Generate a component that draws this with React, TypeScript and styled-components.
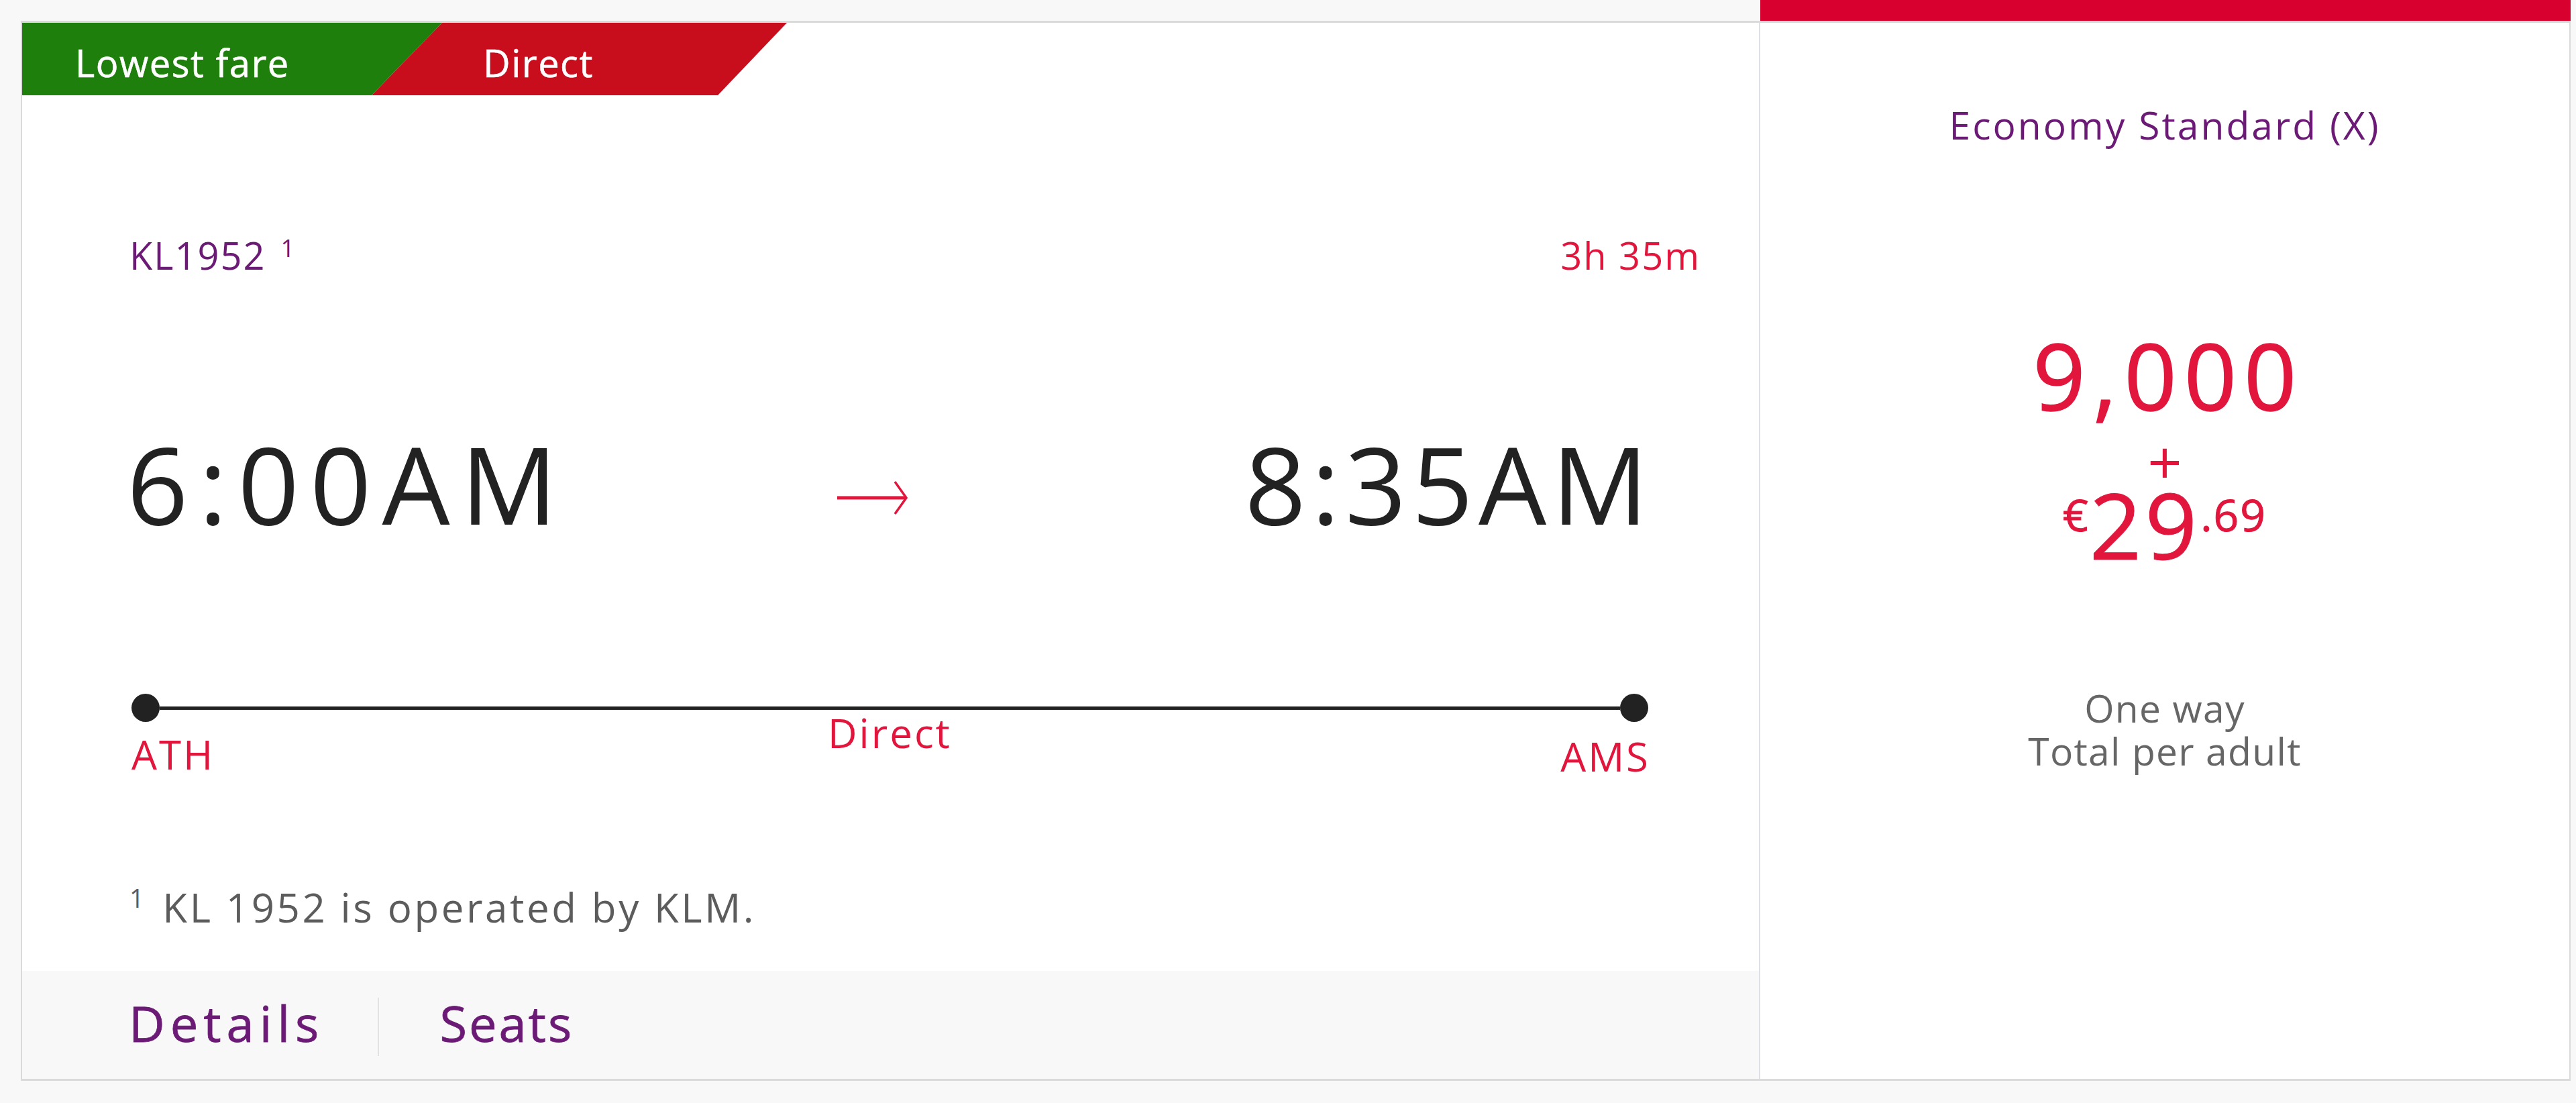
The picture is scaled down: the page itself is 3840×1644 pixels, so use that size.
import React from "react";
import styled, { createGlobalStyle } from "styled-components";

const GlobalStyle = createGlobalStyle`
  html, body {
    margin: 0;
    padding: 0;
    background: #f8f8f8;
  }
  body {
    font-family: "Open Sans", "Noto Sans", "Liberation Sans", sans-serif;
  }
`;

const purple = "#6b1a75";
const red = "#e2163d";

const Page = styled.div`
  width: 3840px;
  height: 1644px;
  box-sizing: border-box;
  padding: 0 8px 0 31px;
  background: #f8f8f8;
`;

// red mark above the selected fare column
const SelectionStrip = styled.div`
  display: grid;
  grid-template-columns: 2593px 1fr;
  height: 31px;
`;

const SelectedMark = styled.div`
  grid-column: 2;
  background: #d7002e;
`;

const Card = styled.div`
  display: grid;
  grid-template-columns: 2589px 1fr;
  border: 2px solid #dadada;
  border-top-width: 3px;
  border-bottom-width: 3px;
  background: #fff;
`;

const FlightPanel = styled.section`
  display: flex;
  flex-direction: column;
`;

const TagRow = styled.div`
  display: flex;
  height: 108px;
`;

const Tag = styled.div<{ $bg: string; $width: number; $pad: number; $overlap?: boolean }>`
  display: flex;
  align-items: center;
  box-sizing: border-box;
  width: ${(p) => p.$width}px;
  height: 100%;
  padding: 10px 0 0 ${(p) => p.$pad}px;
  margin-left: ${(p) => (p.$overlap ? "-105px" : "0")};
  background: ${(p) => p.$bg};
  color: #fff;
  font-size: 56px;
  letter-spacing: 1.5px;
  line-height: 76px;
  -webkit-text-stroke: 0.6px #fff;
  clip-path: ${(p) =>
    p.$overlap
      ? "polygon(105px 0, 100% 0, calc(100% - 103px) 100%, 0 100%)"
      : "polygon(0 0, 100% 0, calc(100% - 105px) 100%, 0 100%)"};
`;

const HeaderRow = styled.div`
  display: flex;
  justify-content: space-between;
  margin-top: 200px;
  padding: 0 87px 0 160px;
  font-size: 56px;
  line-height: 76px;
  letter-spacing: 2px;
`;

const FlightNumber = styled.span`
  color: ${purple};
`;

const Sup = styled.span`
  font-size: 36px;
  line-height: 0;
  vertical-align: 19px;
  margin-left: 22px;
`;

const Duration = styled.span`
  color: ${red};
`;

const TimesRow = styled.div`
  display: grid;
  grid-template-columns: 1fr auto 1fr;
  margin-top: 202px;
  padding: 0 165px 0 156px;
`;

const Time = styled.div<{ $end?: boolean; $spacing: number }>`
  justify-self: ${(p) => (p.$end ? "end" : "start")};
  color: #222;
  font-size: 160px;
  line-height: 200px;
  letter-spacing: ${(p) => p.$spacing}px;
  margin-right: ${(p) => (p.$end ? -p.$spacing : 0)}px;
`;

const ArrowBox = styled.div`
  align-self: end;
  margin: 0 44px 52px 0;
  display: flex;
`;

const Timeline = styled.div`
  display: flex;
  flex-direction: column;
  margin-top: 214px;
  padding: 0 165px 0 163px;
`;

const Track = styled.div`
  display: flex;
  align-items: center;
  height: 42px;
`;

const Dot = styled.span`
  width: 42px;
  height: 42px;
  border-radius: 50%;
  background: #222;
  flex-shrink: 0;
`;

const Line = styled.span`
  flex: 1;
  height: 5px;
  background: #222;
`;

const Labels = styled.div`
  display: grid;
  grid-template-columns: 1fr auto 1fr;
  align-items: start;
  font-size: 60px;
  line-height: 72px;
  letter-spacing: 3px;
  color: ${red};
`;

const RouteLabel = styled.span<{ $align: "start" | "center" | "end"; $top: number }>`
  justify-self: ${(p) => p.$align};
  margin-top: ${(p) => p.$top}px;
  margin-right: ${(p) => (p.$align === "end" ? -3 : 0)}px;
`;

const Footnote = styled.p`
  margin: 153px 0 0;
  padding-left: 160px;
  font-size: 60px;
  line-height: 72px;
  letter-spacing: 3.6px;
  color: #5c5c5c;
`;

const NoteMark = styled.span`
  font-size: 38px;
  line-height: 0;
  vertical-align: 22px;
  margin-right: 24px;
`;

const Footer = styled.nav`
  display: flex;
  align-items: center;
  box-sizing: border-box;
  height: 161px;
  margin-top: 59px;
  padding: 0 0 6px 159px;
  background: #f8f8f8;
`;

const FooterLink = styled.a<{ $spacing: number }>`
  color: ${purple};
  font-size: 74px;
  letter-spacing: ${(p) => p.$spacing}px;
  line-height: 90px;
  text-decoration: none;
  -webkit-text-stroke: 0.8px ${purple};
`;

const FooterDivider = styled.span`
  width: 2px;
  height: 87px;
  margin: 12px 90px 0 80px;
  background: #e2e2e2;
`;

const FarePanel = styled.section`
  display: flex;
  flex-direction: column;
  align-items: center;
  padding-top: 118px;
  border-left: 2px solid #dde1e6;
`;

const FareName = styled.div`
  color: ${purple};
  font-size: 57px;
  line-height: 68px;
  letter-spacing: 3px;
`;

const Miles = styled.div`
  margin-top: 271px;
  color: ${red};
  font-size: 137px;
  line-height: 137px;
  letter-spacing: 11px;
  margin-right: -11px;
  -webkit-text-stroke: 1.5px ${red};
`;

const Plus = styled.div`
  margin-top: 24px;
  color: ${red};
  font-size: 90px;
  line-height: 70px;
`;

const Cash = styled.div`
  display: flex;
  align-items: flex-start;
  color: ${red};
  -webkit-text-stroke: 1px ${red};
`;

const CashMinor = styled.span`
  margin-top: 11px;
  font-size: 66px;
  line-height: 66px;
  letter-spacing: 2px;
`;

const CashMajor = styled.span`
  font-size: 136px;
  line-height: 120px;
  letter-spacing: 5px;
`;

const FareNote = styled.div`
  margin-top: 181px;
  color: #666;
  font-size: 57px;
  line-height: 64px;
  letter-spacing: 1.3px;
  text-align: center;
`;

const Arrow = () => (
  <svg width="106" height="52" viewBox="0 0 106 52">
    <line x1="0" y1="26" x2="102" y2="26" stroke={red} strokeWidth="5" />
    <polyline points="86,2 103,26 86,50" fill="none" stroke={red} strokeWidth="3.5" />
  </svg>
);

export default function App() {
  return (
    <>
      <GlobalStyle />
      <Page>
        <SelectionStrip>
          <SelectedMark />
        </SelectionStrip>
        <Card>
          <FlightPanel>
            <TagRow>
              <Tag $bg="#1f7f0c" $width={626} $pad={79}>
                Lowest fare
              </Tag>
              <Tag $bg="#c80d1d" $width={619} $pad={166} $overlap>
                Direct
              </Tag>
            </TagRow>

            <HeaderRow>
              <FlightNumber>
                KL1952<Sup>1</Sup>
              </FlightNumber>
              <Duration>3h 35m</Duration>
            </HeaderRow>

            <TimesRow>
              <Time $spacing={16}>6:00AM</Time>
              <ArrowBox>
                <Arrow />
              </ArrowBox>
              <Time $end $spacing={8}>
                8:35AM
              </Time>
            </TimesRow>

            <Timeline>
              <Track>
                <Dot />
                <Line />
                <Dot />
              </Track>
              <Labels>
                <RouteLabel $align="start" $top={12}>
                  ATH
                </RouteLabel>
                <RouteLabel $align="center" $top={-20}>
                  Direct
                </RouteLabel>
                <RouteLabel $align="end" $top={15}>
                  AMS
                </RouteLabel>
              </Labels>
            </Timeline>

            <Footnote>
              <NoteMark>1</NoteMark>KL 1952 is operated by KLM.
            </Footnote>

            <Footer>
              <FooterLink href="#" $spacing={8}>
                Details
              </FooterLink>
              <FooterDivider />
              <FooterLink href="#" $spacing={3}>
                Seats
              </FooterLink>
            </Footer>
          </FlightPanel>

          <FarePanel>
            <FareName>Economy Standard (X)</FareName>
            <Miles>9,000</Miles>
            <Plus>+</Plus>
            <Cash>
              <CashMinor>€</CashMinor>
              <CashMajor>29</CashMajor>
              <CashMinor>.69</CashMinor>
            </Cash>
            <FareNote>
              One way
              <br />
              Total per adult
            </FareNote>
          </FarePanel>
        </Card>
      </Page>
    </>
  );
}
